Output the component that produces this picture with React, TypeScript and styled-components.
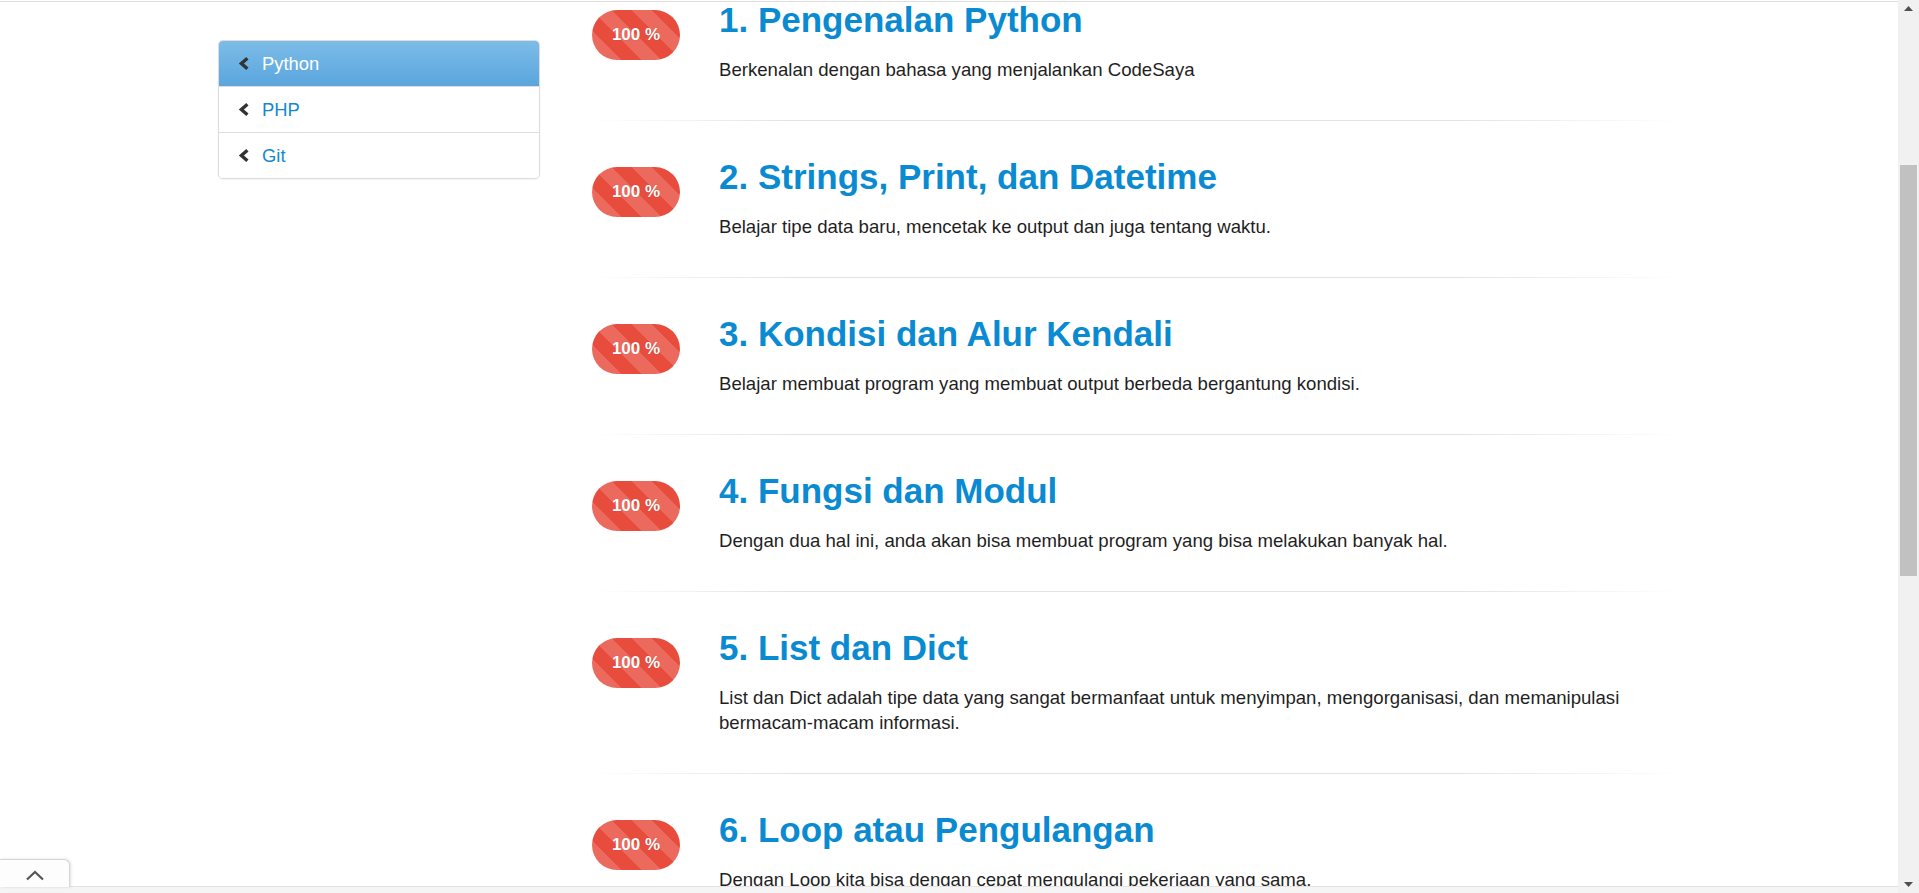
import React from "react";
import styled, { createGlobalStyle } from "styled-components";

const GlobalStyle = createGlobalStyle`
  html, body {
    margin: 0;
    padding: 0;
    height: 100%;
    overflow: hidden;
    background: #fff;
    font-family: "Liberation Sans", Arial, Helvetica, sans-serif;
  }
  #root { height: 100%; }
  * { box-sizing: border-box; }
`;

const Shell = styled.div`
  display: flex;
  height: 100vh;
  width: 100vw;
`;

const PageColumn = styled.div`
  flex: 1;
  display: flex;
  flex-direction: column;
  min-width: 0;
`;

const TopRule = styled.div`
  margin-top: 1px;
  height: 1px;
  background: #dfdfdf;
  flex: none;
`;

const Viewport = styled.div`
  flex: 1;
  overflow: hidden;
  min-height: 0;
`;

const Container = styled.div`
  width: 1462px;
  margin: 0 auto;
  display: flex;
  align-items: flex-start;
  gap: 52px;
`;

const Sidebar = styled.nav`
  width: 322px;
  flex: none;
  margin-top: 38px;
  border: 1px solid #dcdcdc;
  border-radius: 5px;
  box-shadow: 0 1px 2px rgba(0, 0, 0, 0.06);
  overflow: hidden;
  background: #fff;
`;

const NavRow = styled.a<{ $active?: boolean }>`
  display: flex;
  align-items: center;
  gap: 12px;
  padding: 10px 24px 10px 19px;
  font-size: 18.4px;
  line-height: 25px;
  text-decoration: none;
  color: ${(p) => (p.$active ? "#fff" : "#1389cf")};
  background: ${(p) =>
    p.$active ? "linear-gradient(to bottom, #7cbce8 0%, #5aa6de 100%)" : "#fff"};
  & + & {
    border-top: 1px solid #dedede;
  }
`;

const ChevronLeft = () => (
  <svg width="12" height="13" viewBox="0 0 12 13" aria-hidden="true">
    <polyline
      points="9.4,1.3 3.4,6.5 9.4,11.7"
      fill="none"
      stroke="#333"
      strokeWidth="3.4"
      strokeLinejoin="miter"
      strokeLinecap="butt"
    />
  </svg>
);

const Content = styled.main`
  flex: 1;
  min-width: 0;
`;

const Lesson = styled.article<{ $first?: boolean }>`
  display: grid;
  grid-template-columns: 88px 1fr;
  column-gap: 39px;
  padding: ${(p) => (p.$first ? "0" : "38px")} 0 38px;
`;

const Badge = styled.div`
  width: 88px;
  height: 50px;
  margin-top: 8px;
  border-radius: 25px;
  background-color: #e74c3c;
  background-image: linear-gradient(
    45deg,
    rgba(255, 255, 255, 0.17) 25%,
    transparent 25%,
    transparent 50%,
    rgba(255, 255, 255, 0.17) 50%,
    rgba(255, 255, 255, 0.17) 75%,
    transparent 75%,
    transparent
  );
  background-size: 40px 40px;
  display: flex;
  align-items: center;
  justify-content: center;
  color: #fff;
  font-weight: bold;
  font-size: 17px;
  text-shadow: 0 0 1px rgba(120, 20, 10, 0.25);
`;

const Body = styled.div`
  min-width: 0;
`;

const Title = styled.h2`
  margin: 0 0 20px;
  font-size: 35px;
  line-height: 1;
  font-weight: bold;
  color: #0a8ad1;
`;

const Desc = styled.p`
  margin: 0;
  font-size: 18.6px;
  line-height: 25px;
  color: #1f1f1f;
`;

const Separator = styled.hr`
  margin: 0;
  border: 0;
  height: 1px;
  background: linear-gradient(
    to right,
    rgba(225, 225, 225, 0) 0%,
    #e3e3e3 18%,
    #e3e3e3 80%,
    rgba(225, 225, 225, 0) 100%
  );
`;

const Footer = styled.footer`
  position: relative;
  flex: none;
  height: 7px;
  border-top: 1px solid #e3e3e3;
  background: #f5f5f5;
`;

const FooterTab = styled.button`
  position: absolute;
  left: 0;
  bottom: 100%;
  width: 70px;
  height: 28px;
  padding: 4px 0 0;
  border: 1px solid #d6d6d6;
  border-left: 0;
  border-bottom: 0;
  border-top-right-radius: 6px;
  background: #fdfdfd;
  box-shadow: 1px 0 3px rgba(0, 0, 0, 0.12);
  display: flex;
  align-items: center;
  justify-content: center;
`;

const Scrollbar = styled.div`
  width: 21px;
  flex: none;
  background: #f1f1f1;
  display: flex;
  flex-direction: column;
  align-items: center;
`;

const ScrollArrow = styled.div`
  height: 17px;
  width: 100%;
  display: flex;
  align-items: center;
  justify-content: center;
  flex: none;
`;

const ThumbTrack = styled.div`
  flex: 1;
  width: 100%;
  padding: 0 2px;
`;

const Thumb = styled.div`
  width: 100%;
  background: #c1c1c1;
`;

const lessons = [
  {
    title: "1. Pengenalan Python",
    desc: "Berkenalan dengan bahasa yang menjalankan CodeSaya",
  },
  {
    title: "2. Strings, Print, dan Datetime",
    desc: "Belajar tipe data baru, mencetak ke output dan juga tentang waktu.",
  },
  {
    title: "3. Kondisi dan Alur Kendali",
    desc: "Belajar membuat program yang membuat output berbeda bergantung kondisi.",
  },
  {
    title: "4. Fungsi dan Modul",
    desc: "Dengan dua hal ini, anda akan bisa membuat program yang bisa melakukan banyak hal.",
  },
  {
    title: "5. List dan Dict",
    desc: "List dan Dict adalah tipe data yang sangat bermanfaat untuk menyimpan, mengorganisasi, dan memanipulasi bermacam-macam informasi.",
  },
  {
    title: "6. Loop atau Pengulangan",
    desc: "Dengan Loop kita bisa dengan cepat mengulangi pekerjaan yang sama.",
  },
];

const navItems = [
  { label: "Python", active: true },
  { label: "PHP", active: false },
  { label: "Git", active: false },
];

export default function App() {
  // scroll position of the page, expressed as thumb geometry
  const thumbOffset = 148;
  const thumbSize = 411;
  return (
    <>
      <GlobalStyle />
      <Shell>
        <PageColumn>
          <TopRule />
          <Viewport>
            <Container>
              <Sidebar>
                {navItems.map((n) => (
                  <NavRow key={n.label} href="#" $active={n.active}>
                    <ChevronLeft />
                    {n.label}
                  </NavRow>
                ))}
              </Sidebar>
              <Content>
                {lessons.map((l, i) => (
                  <React.Fragment key={l.title}>
                    <Lesson $first={i === 0}>
                      <Badge>100 %</Badge>
                      <Body>
                        <Title>{l.title}</Title>
                        <Desc>{l.desc}</Desc>
                      </Body>
                    </Lesson>
                    {i < lessons.length - 1 && <Separator />}
                  </React.Fragment>
                ))}
              </Content>
            </Container>
          </Viewport>
          <Footer>
            <FooterTab aria-label="Buka">
              <svg width="20" height="11" viewBox="0 0 20 11" aria-hidden="true">
                <polyline
                  points="2,9.5 10,2 18,9.5"
                  fill="none"
                  stroke="#555"
                  strokeWidth="2.2"
                />
              </svg>
            </FooterTab>
          </Footer>
        </PageColumn>
        <Scrollbar>
          <ScrollArrow>
            <svg width="9" height="5" viewBox="0 0 9 5" aria-hidden="true">
              <polygon points="0,5 4.5,0 9,5" fill="#505050" />
            </svg>
          </ScrollArrow>
          <ThumbTrack>
            <Thumb style={{ marginTop: thumbOffset, height: thumbSize }} />
          </ThumbTrack>
          <ScrollArrow>
            <svg width="9" height="5" viewBox="0 0 9 5" aria-hidden="true">
              <polygon points="0,0 9,0 4.5,5" fill="#505050" />
            </svg>
          </ScrollArrow>
        </Scrollbar>
      </Shell>
    </>
  );
}
